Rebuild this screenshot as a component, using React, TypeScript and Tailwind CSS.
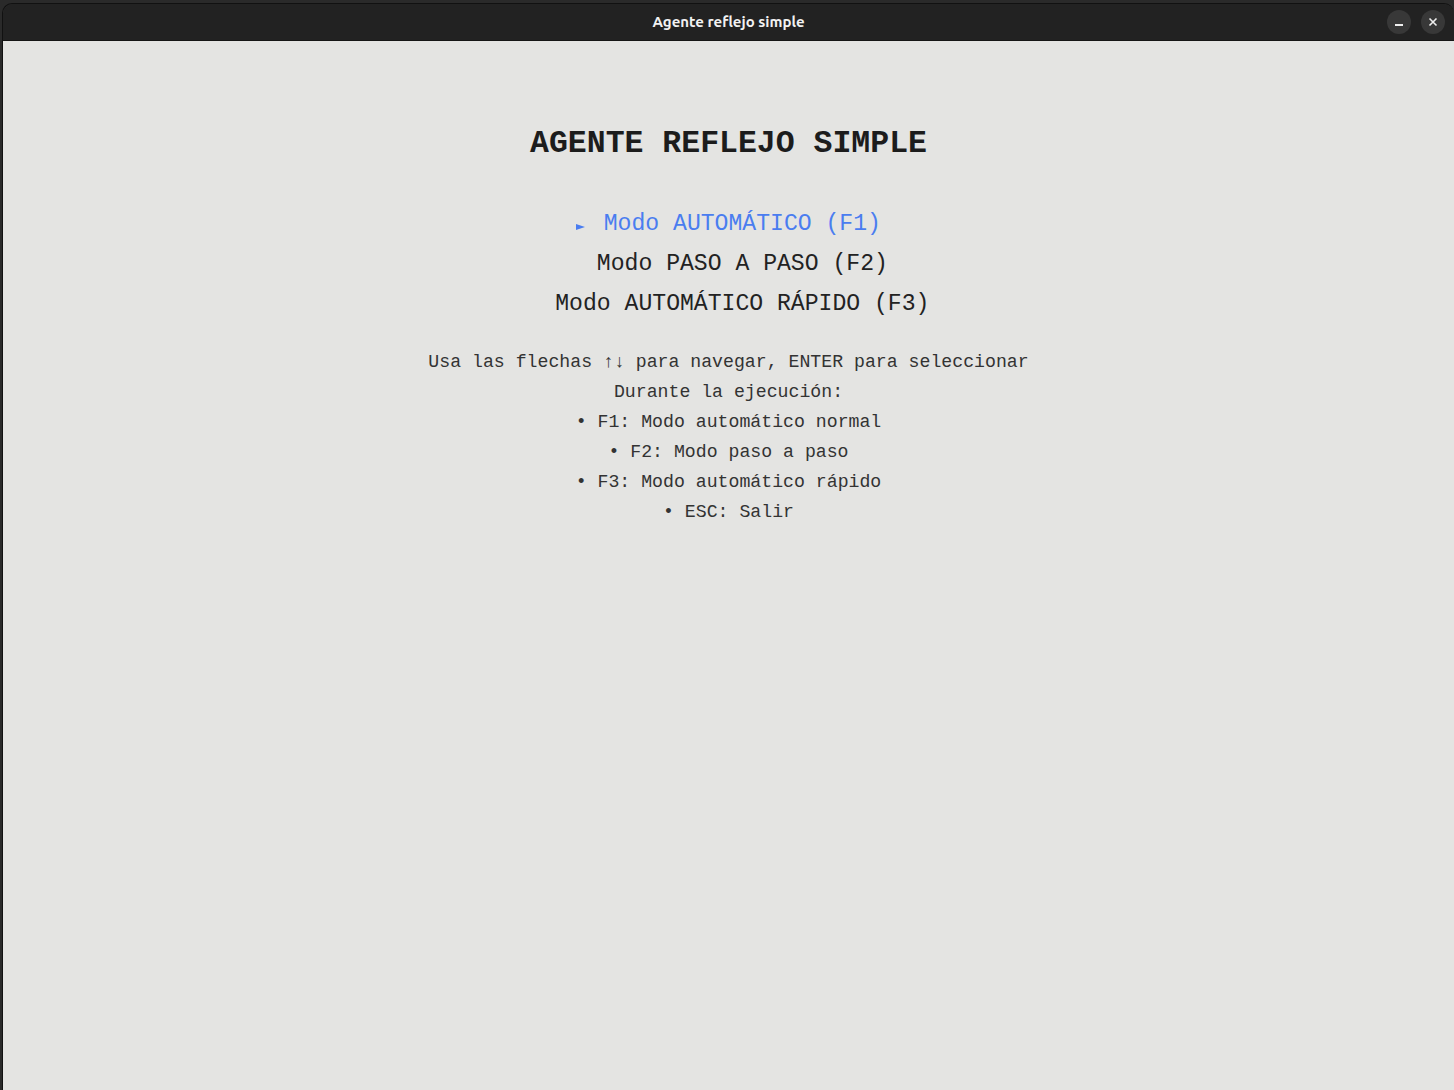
import React from 'react';

const modes = [
  'Modo AUTOMÁTICO (F1)',
  'Modo PASO A PASO (F2)',
  'Modo AUTOMÁTICO RÁPIDO (F3)',
];

const help = [
  'Usa las flechas ↑↓ para navegar, ENTER para seleccionar',
  'Durante la ejecución:',
  '• F1: Modo automático normal',
  '• F2: Modo paso a paso',
  '• F3: Modo automático rápido',
  '• ESC: Salir',
];

function TitleBar() {
  return (
    <div className="relative flex h-[36px] items-center justify-center rounded-t-[10px] bg-[#222222]">
      <span className="font-['Ubuntu','Noto_Sans',sans-serif] text-[15px] font-bold text-[#f2f2f2]">
        Agente reflejo simple
      </span>
      <div className="absolute right-[9px] top-[6px] flex gap-[10px]">
        <button className="flex h-[24px] w-[24px] items-center justify-center rounded-full bg-[#383838]">
          <span className="mt-[6px] block h-[1.5px] w-[8px] bg-[#eeeeee]" />
        </button>
        <button className="flex h-[24px] w-[24px] items-center justify-center rounded-full bg-[#383838]">
          <svg width="10" height="10" viewBox="0 0 10 10">
            <path d="M1.5 1.5L8.5 8.5M8.5 1.5L1.5 8.5" stroke="#eeeeee" strokeWidth="1.6" />
          </svg>
        </button>
      </div>
    </div>
  );
}

export default function App() {
  const selected = 0;
  return (
    <div className="flex h-[1090px] w-[1454px] flex-col bg-[#2a2a2a] pt-[3px] pl-[2px]">
      <div className="flex flex-1 flex-col overflow-hidden rounded-t-[10px] border-t border-l border-[#111111]">
        <TitleBar />
        <div className="flex flex-1 flex-col items-center border-t border-[#151515] bg-[#e4e4e2] pt-[83px] font-['Courier_New','Nimbus_Mono_PS','FreeMono','Courier','Liberation_Mono',monospace]">
          <h1 className="text-[31.5px] font-bold leading-[40px] text-[#1c1c1c]">
            AGENTE REFLEJO SIMPLE
          </h1>
          <div className="mt-[40px] flex flex-col items-center">
            {modes.map((m, i) => (
              <div
                key={m}
                className={
                  i === selected
                    ? 'flex items-center text-[23.1px] leading-[40px] text-[#4a7df0]'
                    : 'whitespace-pre text-[23.1px] leading-[40px] text-[#222222]'
                }
              >
                {i === selected ? (
                  <span className="inline-flex w-[27.7px] items-center">
                    <svg width="9" height="8" viewBox="0 0 9 8" className="mt-[5px]">
                      <path d="M0 1L9 4L0 7Z" fill="#4a7df0" />
                    </svg>
                  </span>
                ) : (
                  '  '
                )}
                <span className="whitespace-pre">{m}</span>
              </div>
            ))}
          </div>
          <div className="mt-[23px] flex flex-col items-center">
            {help.map((h) => (
              <div key={h} className="whitespace-pre text-[18.2px] leading-[30px] text-[#333333]">
                {h}
              </div>
            ))}
          </div>
        </div>
      </div>
    </div>
  );
}
